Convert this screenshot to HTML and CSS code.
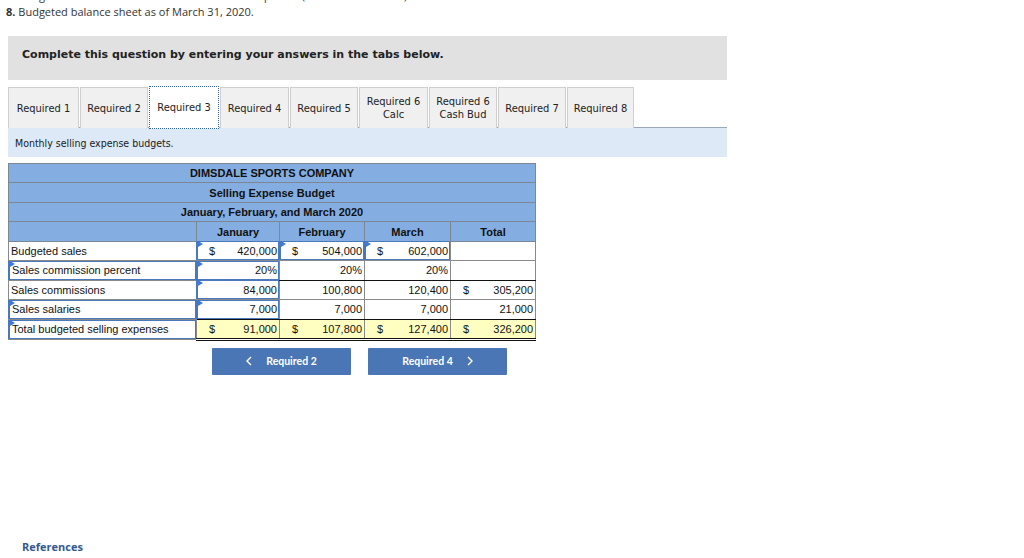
FILE: index.html
```html
<!DOCTYPE html>
<html>
<head>
<meta charset="utf-8">
<link rel="stylesheet" href="styles.css">
</head>
<body>
<div class="page">
  <div class="intro">
    <p><b>7.</b> Budgeted income statement for the entire first quarter (not for each month).</p>
    <p><b>8.</b> Budgeted balance sheet as of March 31, 2020.</p>
  </div>

  <div class="instr">Complete this question by entering your answers in the tabs below.</div>

  <div class="tabs">
    <div class="tab w71">Required 1</div>
    <div class="tab w68">Required 2</div>
    <div class="tab w70 active">Required 3</div>
    <div class="tab w69">Required 4</div>
    <div class="tab w68">Required 5</div>
    <div class="tab w69">Required 6<br>Calc</div>
    <div class="tab w68">Required 6<br>Cash Bud</div>
    <div class="tab w68">Required 7</div>
    <div class="tab w67">Required 8</div>
  </div>
  <div class="panel">Monthly selling expense budgets.</div>

  <table class="budget">
    <colgroup>
      <col class="c-label"><col class="c-jan"><col class="c-feb"><col class="c-mar"><col class="c-tot">
    </colgroup>
    <tr class="hd"><td colspan="5">DIMSDALE SPORTS COMPANY</td></tr>
    <tr class="hd"><td colspan="5">Selling Expense Budget</td></tr>
    <tr class="hd"><td colspan="5">January, February, and March 2020</td></tr>
    <tr class="hd cols"><td></td><td>January</td><td>February</td><td>March</td><td>Total</td></tr>
    <tr>
      <td class="lbl">Budgeted sales</td>
      <td class="in"><div class="box"><span>$</span><span>420,000</span></div></td>
      <td class="in"><div class="box"><span>$</span><span>504,000</span></div></td>
      <td class="in"><div class="box"><span>$</span><span>602,000</span></div></td>
      <td></td>
    </tr>
    <tr class="under">
      <td class="in lbl"><div class="box">Sales commission percent</div></td>
      <td class="in"><div class="box r"><span>20%</span></div></td>
      <td class="num"><div class="val r"><span>20%</span></div></td>
      <td class="num"><div class="val r"><span>20%</span></div></td>
      <td></td>
    </tr>
    <tr>
      <td class="lbl">Sales commissions</td>
      <td class="in"><div class="box r"><span>84,000</span></div></td>
      <td class="num"><div class="val r"><span>100,800</span></div></td>
      <td class="num"><div class="val r"><span>120,400</span></div></td>
      <td class="num"><div class="val"><span>$</span><span>305,200</span></div></td>
    </tr>
    <tr class="under">
      <td class="in lbl"><div class="box">Sales salaries</div></td>
      <td class="in"><div class="box r"><span>7,000</span></div></td>
      <td class="num"><div class="val r"><span>7,000</span></div></td>
      <td class="num"><div class="val r"><span>7,000</span></div></td>
      <td class="num"><div class="val r"><span>21,000</span></div></td>
    </tr>
    <tr class="total">
      <td class="in lbl"><div class="box">Total budgeted selling expenses</div></td>
      <td class="num"><div class="val"><span>$</span><span>91,000</span></div></td>
      <td class="num"><div class="val"><span>$</span><span>107,800</span></div></td>
      <td class="num"><div class="val"><span>$</span><span>127,400</span></div></td>
      <td class="num"><div class="val"><span>$</span><span>326,200</span></div></td>
    </tr>
  </table>

  <div class="nav">
    <button class="btn"><svg class="chev" width="6" height="10" viewBox="0 0 6 10"><path d="M5 1 L1 5 L5 9" fill="none" stroke="#fff" stroke-width="1.4"/></svg>Required 2</button>
    <button class="btn">Required 4<svg class="chev next" width="6" height="10" viewBox="0 0 6 10"><path d="M1 1 L5 5 L1 9" fill="none" stroke="#fff" stroke-width="1.4"/></svg></button>
  </div>

  <div class="refs">References</div>
</div>
</body>
</html>
```

FILE: styles.css
```css
html, body {
  margin: 0;
  padding: 0;
  background: #ffffff;
}
.page {
  width: 1024px;
  height: 558px;
  overflow: hidden;
  font-family: "Liberation Sans", Arial, sans-serif;
  color: #222;
}
.intro {
  margin-top: -12px;
  padding-left: 6px;
  font-family: "Open Sans", Lato, sans-serif;
  font-size: 11px;
  line-height: 16px;
  color: #333;
}
.intro p {
  margin: 0;
}
.instr {
  margin: 16px 0 0 8px;
  width: 719px;
  height: 44px;
  box-sizing: border-box;
  padding: 12px 14px 10px;
  background: #e1e1e1;
  font-family: "DejaVu Sans", Verdana, sans-serif;
  font-weight: bold;
  font-size: 11px;
  line-height: 14px;
  color: #222;
}
.tabs {
  display: flex;
  margin: 6px 0 0 8px;
  width: 719px;
  height: 41px;
  border-bottom: 1px solid #9aa7b8;
  align-items: flex-start;
}
.tab {
  display: flex;
  align-items: center;
  justify-content: center;
  text-align: center;
  box-sizing: border-box;
  height: 41px;
  margin-top: 1px;
  margin-right: 1px;
  padding: 0;
  background: #f0f0f0;
  border: 1px solid #cfcfcf;
  border-bottom: none;
  font-family: "DejaVu Sans Condensed", "DejaVu Sans", Tahoma, sans-serif;
  font-size: 11px;
  line-height: 13px;
  color: #222;
  white-space: nowrap;
}
.w67 { width: 67px; }
.w68 { width: 68px; }
.w69 { width: 69px; }
.w70 { width: 70px; }
.w71 { width: 71px; }
.tab.active {
  background: #ffffff;
  border: 1px dotted #2f5fb3;
  height: 43px;
  margin-top: 0;
  position: relative;
  z-index: 1;
}
.panel {
  margin-left: 8px;
  width: 719px;
  height: 29px;
  box-sizing: border-box;
  padding: 1px 7px 0;
  background: #dde9f7;
  font-family: "DejaVu Sans Condensed", "DejaVu Sans", Tahoma, sans-serif;
  font-size: 10.5px;
  line-height: 29px;
  color: #1a1a1a;
}
.budget {
  margin: 6px 0 0 8px;
  border-collapse: collapse;
  table-layout: fixed;
  width: 528px;
  font-size: 11px;
  color: #111;
}
.c-label { width: 188px; }
.c-jan { width: 83px; }
.c-feb { width: 85px; }
.c-mar { width: 86px; }
.c-tot { width: 85px; }
.budget td {
  height: 18.45px;
  padding: 0;
  border: 1px solid #8a8a8a;
  line-height: 18px;
  white-space: nowrap;
}
.hd td {
  background: #84aee1;
  text-align: center;
  font-weight: bold;
  border-color: #7c8794;
}
.lbl {
  padding-left: 2px !important;
}
.in {
  position: relative;
}
.in .box {
  position: relative;
  box-sizing: border-box;
  height: 19px;
  margin: -1px 0 -1px -1px;
  border: 1px solid #4a78bd;
  border-left-width: 2px;
  padding: 0 1px 0 2px;
  display: flex;
  justify-content: space-between;
  align-items: center;
  background: #fff;
}
.in .box.r {
  justify-content: flex-end;
}
.in .box::before {
  content: "";
  position: absolute;
  left: 0;
  top: 0;
  width: 0;
  height: 0;
  border-top: 3px solid transparent;
  border-bottom: 3px solid transparent;
  border-left: 5px solid #3d79d8;
  margin-top: -1px;
}
.in.lbl {
  padding-left: 0 !important;
}
.in.lbl .box {
  justify-content: flex-start;
  padding-left: 2px;
}
.in .box span:first-child:not(:last-child),
.val span:first-child:not(:last-child) {
  padding-left: 9px;
}
.val {
  display: flex;
  justify-content: space-between;
  padding: 0 2px 0 3px;
}
.val.r {
  justify-content: flex-end;
}
.under td.num,
.under td.in + td,
.under td:last-child {
  border-bottom-color: #111;
}
.total td.num {
  background: #ffffc1;
  border-bottom: 3px double #111;
}
.total td.in .box {
  border-bottom-width: 1px;
}
.nav {
  display: flex;
  gap: 17px;
  margin: 7px 0 0 212px;
}
.btn {
  width: 139px;
  height: 27px;
  border: none;
  border-radius: 1px;
  background: #4a76b6;
  color: #fff;
  font-family: Lato, "Open Sans", sans-serif;
  font-weight: bold;
  font-size: 10.5px;
  display: flex;
  align-items: center;
  justify-content: center;
  padding: 0 0 0 0;
}
.chev {
  display: block;
  margin-right: 14px;
}
.chev.next {
  margin-right: 0;
  margin-left: 14px;
}
.refs {
  margin: 164px 0 0 22px;
  font-family: "Open Sans", Lato, sans-serif;
  font-weight: bold;
  font-size: 11px;
  color: #34588f;
}
```
